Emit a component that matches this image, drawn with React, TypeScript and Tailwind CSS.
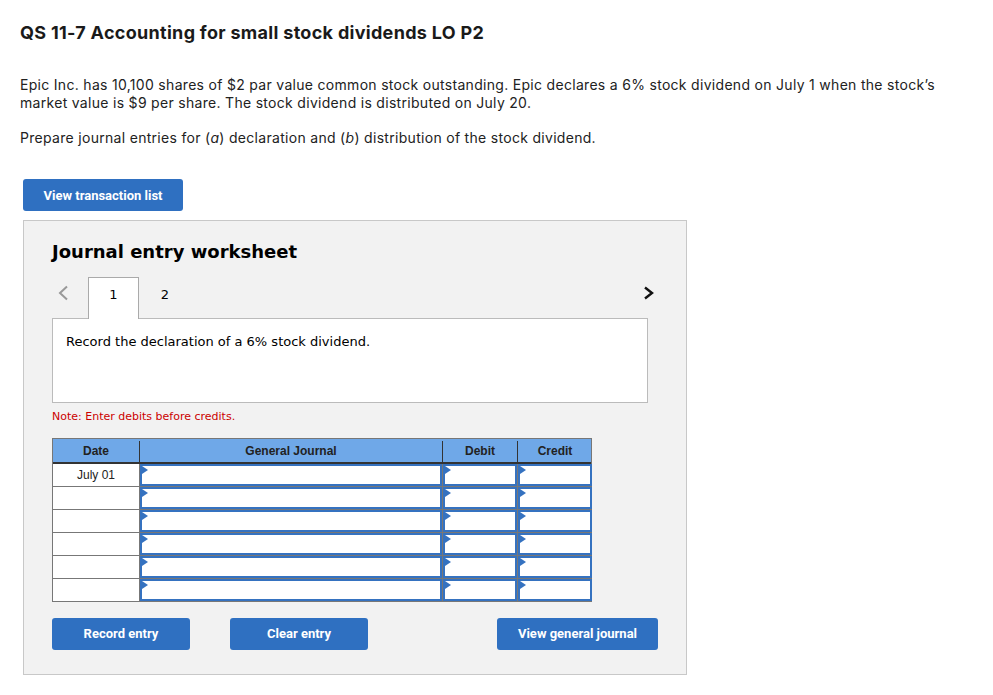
import React from 'react';

const cols = 'grid grid-cols-[86px_303px_75px_75px]';

const InputCell = () => (
  <div className="relative h-[23px] border-l border-b border-[#777] bg-[#777] p-0">
    <div className="relative h-full border-2 border-[#3572c0] bg-white">
      <span className="absolute left-0 top-0 h-0 w-0 border-y-[4px] border-l-[6px] border-y-transparent border-l-[#3572c0]"></span>
    </div>
  </div>
);

const JournalRow = ({ date }: { date: string }) => (
  <div className={cols}>
    <div className="flex h-[23px] items-center justify-center border-b border-[#777] bg-white pt-[1px] text-[12px] text-[#222] [font-family:'Liberation_Sans',Arial,sans-serif]">
      {date}
    </div>
    <InputCell />
    <InputCell />
    <InputCell />
  </div>
);

const ActionButton = ({ label, width }: { label: string; width: string }) => (
  <button
    className={`${width} h-[32px] shrink-0 rounded-[3px] bg-[#2f70c1] pt-[1px] text-[13px] font-bold text-white [font-family:Roboto,sans-serif]`}
  >
    {label}
  </button>
);

export default function App() {
  return (
    <div className="min-h-[695px] bg-white pl-5 pt-[22px] text-[#222] [font-family:Inter,'Liberation_Sans',sans-serif]">
      <h1 className="text-[18px] font-bold leading-[22px] tracking-[0.3px] text-[#1a1a1a]">
        QS 11-7 Accounting for small stock dividends LO P2
      </h1>

      <p className="mt-[32px] text-[14px] leading-[18px] tracking-[0.3px] text-[#222]">
        Epic Inc. has 10,100 shares of $2 par value common stock outstanding. Epic declares a 6% stock dividend on July 1 when the stock’s
        <br />
        market value is $9 per share. The stock dividend is distributed on July 20.
      </p>
      <p className="mt-[17px] text-[14px] leading-[18px] tracking-[0.3px]">
        Prepare journal entries for (<i>a</i>) declaration and (<i>b</i>) distribution of the stock dividend.
      </p>

      <div className="ml-[3px] mt-[32px]">
        <ActionButton label="View transaction list" width="w-[160px]" />
      </div>

      <div className="ml-[3px] mt-[9px] h-[455px] w-[664px] border border-[#c8c8c8] bg-[#f2f2f2] pl-[28px] pr-[31px] pt-[19px] [font-family:'DejaVu_Sans',Verdana,sans-serif]">
        <h2 className="text-[18px] font-bold leading-[24px] text-black">Journal entry worksheet</h2>

        <div className="mt-[13px] flex h-[41px] items-stretch">
          <div className="flex w-[36px] items-start justify-start pl-[5px] pt-[8px]">
            <svg width="12" height="16" viewBox="0 0 12 16">
              <polyline points="10,1.5 3,8 10,14.5" fill="none" stroke="#999" strokeWidth="2" />
            </svg>
          </div>
          <div className="relative z-10 mb-[-1px] flex h-[42px] w-[51px] items-start justify-center border border-b-0 border-[#aaa] bg-white pt-[7px] text-[13px] text-black">
            1
          </div>
          <div className="flex w-[52px] items-start justify-center pt-[8px] text-[13px] text-black">2</div>
          <div className="flex-1"></div>
          <div className="flex w-[12px] items-start pt-[9px]">
            <svg width="12" height="14" viewBox="0 0 12 14">
              <polyline points="2,1.5 9,7 2,12.5" fill="none" stroke="#111" strokeWidth="2.4" />
            </svg>
          </div>
        </div>

        <div className="h-[85px] w-[596px] border border-[#bbb] bg-white pl-[13px] pt-[13px] text-[13px] text-black">
          Record the declaration of a 6% stock dividend.
        </div>

        <div className="mt-[6px] text-[11px] text-[#c00]">Note: Enter debits before credits.</div>

        <div className="mt-[12px] w-[540px] border-l border-t border-r border-[#777]">
          <div className={`${cols} h-[25px] border-b-2 border-[#333] bg-[#6fa8e8] pt-[2px] text-[12px] font-bold text-[#222] [font-family:'Liberation_Sans',Arial,sans-serif]`}>
            <div className="flex items-center justify-center">Date</div>
            <div className="flex items-center justify-center border-l border-[#333]">General Journal</div>
            <div className="flex items-center justify-center border-l border-[#333]">Debit</div>
            <div className="flex items-center justify-center border-l border-[#333]">Credit</div>
          </div>
          <JournalRow date="July 01" />
          <JournalRow date="" />
          <JournalRow date="" />
          <JournalRow date="" />
          <JournalRow date="" />
          <JournalRow date="" />
        </div>

        <div className="mt-[16px] flex">
          <ActionButton label="Record entry" width="w-[138px]" />
          <div className="w-[40px] shrink-0"></div>
          <ActionButton label="Clear entry" width="w-[138px]" />
          <div className="w-[129px] shrink-0"></div>
          <ActionButton label="View general journal" width="w-[161px]" />
        </div>
      </div>
    </div>
  );
}
